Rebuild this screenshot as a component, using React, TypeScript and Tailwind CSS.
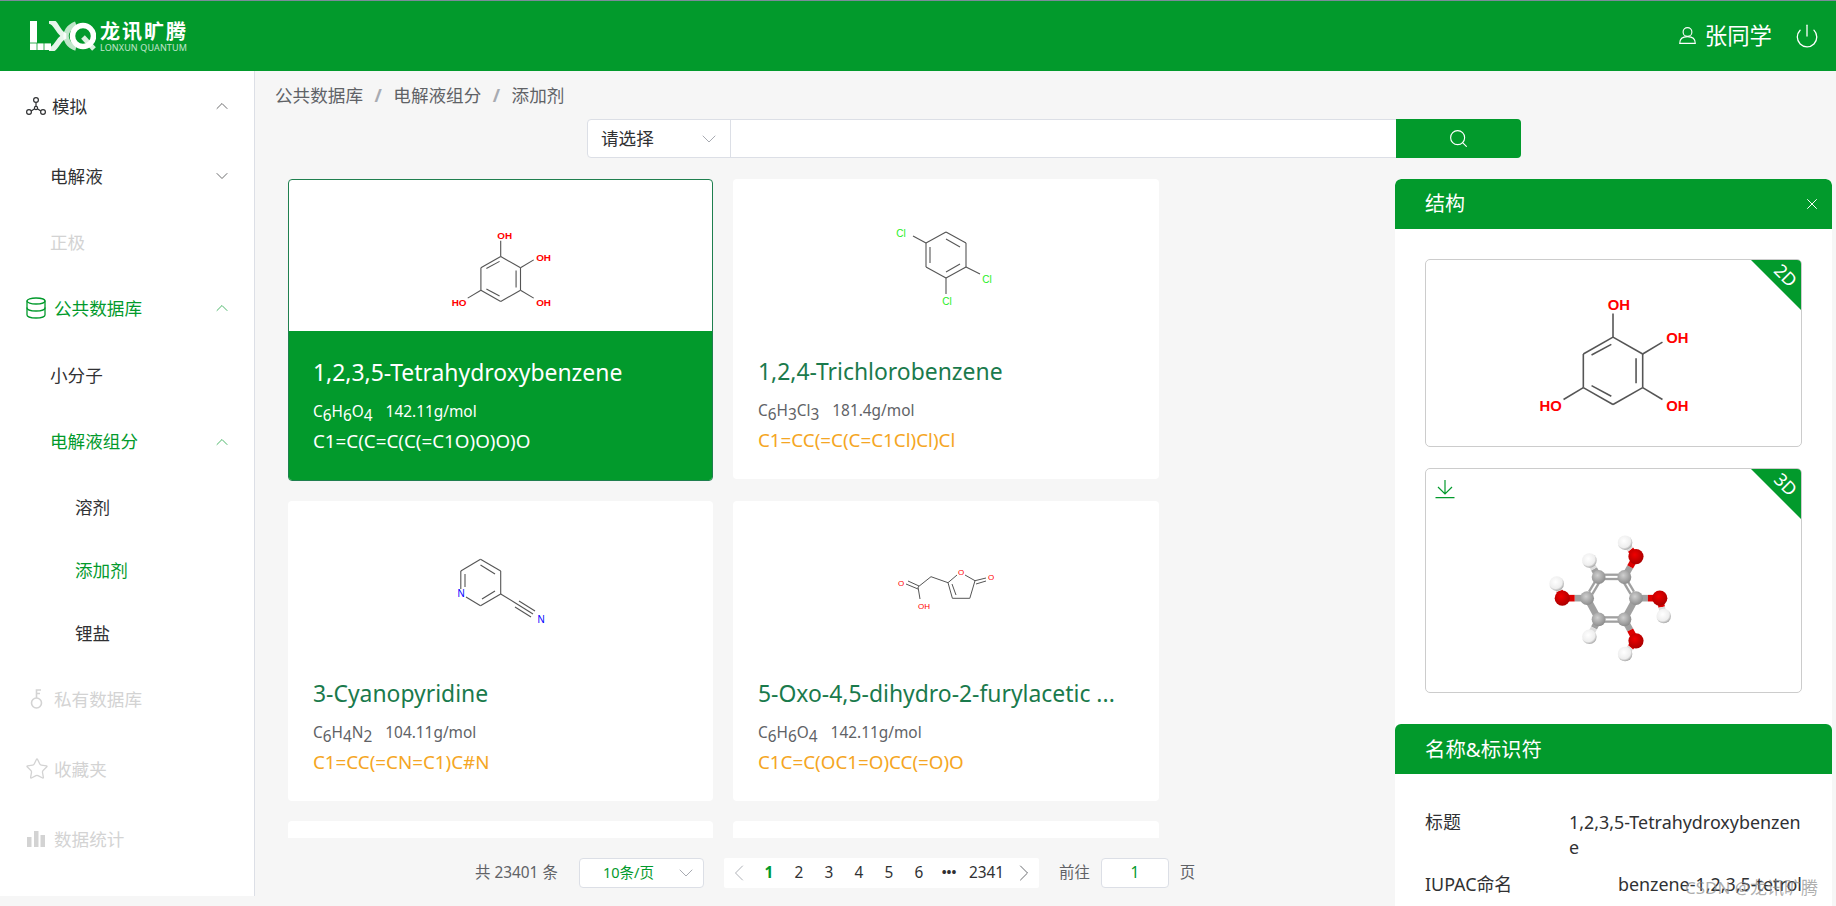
import { ChevronDown, ChevronLeft, ChevronRight, ChevronUp, Database, Power, Search, Star, X } from 'lucide-react';
import type { ReactNode } from 'react';

const BOND = '#555555';

function Sub({ children }: { children: ReactNode }) {
  return <sub className="text-[1em]">{children}</sub>;
}

function Bonds({ lines, width = 1.1 }: { lines: number[][]; width?: number }) {
  return (
    <g stroke={BOND} strokeWidth={width} fill="none">
      {lines.map((l, i) => (
        <line key={i} x1={l[0]} y1={l[1]} x2={l[2]} y2={l[3]} />
      ))}
    </g>
  );
}

// same drawing for the little card picture and the big panel one
function Tetrahydroxy({ cx, cy, scale, width }: { cx: number; cy: number; scale: number; width: number }) {
  return (
    <g transform={`translate(${cx} ${cy}) scale(${scale})`}>
      <Bonds
        width={width}
        lines={[
          [0, -34, 30, -17], [30, -17, 30, 17], [30, 17, 0, 34], [0, 34, -30, 17], [-30, 17, -30, -17], [-30, -17, 0, -34],
          [-21.7, -16, -1.7, -26.7], [23.3, -12.7, 23.3, 12.7], [-21.7, 15, -1.7, 25.7],
          [0, -34, 0, -58], [30, -17, 50, -29], [30, 17, 50, 29], [-30, 17, -50, 29],
        ]}
      />
      <g fill="#ff0000" fontSize="15" fontWeight="700" fontFamily="'Liberation Sans', sans-serif" textAnchor="middle">
        <text x="6" y="-61">OH</text>
        <text x="65" y="-28">OH</text>
        <text x="65" y="41">OH</text>
        <text x="-63" y="41">HO</text>
      </g>
    </g>
  );
}

function Trichloro() {
  return (
    <svg className="block w-full h-full" viewBox="0 0 426 151">
      <Bonds
        lines={[
          [213, 53, 233, 64], [233, 64, 233, 88], [233, 88, 213, 99], [213, 99, 193, 88], [193, 88, 193, 64], [193, 64, 213, 53],
          [213, 60, 227, 68], [197, 68, 197, 84], [227, 85, 213, 93],
          [193, 64, 180, 57], [233, 88, 247, 95], [213, 99, 213, 115],
        ]}
      />
      <g fill="#22ee22" fontSize="10" fontFamily="'Liberation Sans', sans-serif" textAnchor="middle">
        <text x="168" y="58">Cl</text>
        <text x="254" y="104">Cl</text>
        <text x="214" y="126">Cl</text>
      </g>
    </svg>
  );
}

function Cyanopyridine() {
  return (
    <svg className="block w-full h-full" viewBox="0 0 425 151">
      <Bonds
        lines={[
          [192.5, 58.3, 212.7, 70], [212.7, 70, 212.7, 93], [212.7, 93, 192.5, 104.7], [192.5, 104.7, 178, 96],
          [172.8, 88, 172.8, 70], [172.8, 70, 192.5, 58.3],
          [192.5, 64, 207, 73], [207, 90, 194, 98], [177, 73, 177, 86],
          [212.7, 93, 229, 103], [229, 103, 245, 113], [231, 100, 247, 110], [227, 106, 243, 116],
        ]}
      />
      <g fill="#0000ff" fontSize="10" fontFamily="'Liberation Sans', sans-serif" textAnchor="middle">
        <text x="173" y="96">N</text>
        <text x="253" y="122">N</text>
      </g>
    </svg>
  );
}

function Furylacetic() {
  return (
    <svg className="block w-full h-full" viewBox="0 0 426 151">
      <Bonds
        width={1}
        lines={[
          [173, 83, 185, 88], [175, 80, 186, 85], [185, 86, 187, 98], [185, 86, 198, 75.7], [198, 75.7, 215, 81.7],
          [215, 81.7, 224, 74], [232, 74, 242, 79.7], [242, 79.7, 236.8, 97.3], [236.8, 97.3, 219.4, 97.3],
          [219.4, 97.3, 215, 81.7], [223, 94, 219, 83], [242, 79.7, 253, 77], [243, 83, 253, 80],
        ]}
      />
      <g fill="#ff0000" fontSize="8" fontFamily="'Liberation Sans', sans-serif" textAnchor="middle">
        <text x="168" y="85">O</text>
        <text x="191" y="108">OH</text>
        <text x="228" y="74">O</text>
        <text x="258" y="79">O</text>
      </g>
    </svg>
  );
}

function Ball({ x, y, r, id }: { x: number; y: number; r: number; id: string }) {
  return <circle cx={x} cy={y} r={r} fill={`url(#${id})`} />;
}

function Ball3D() {
  const carbons = [[655, 352], [733, 352], [768, 416], [733, 480], [655, 480], [620, 416]];
  const oxygens = [[768, 290], [840, 416], [768, 545], [545, 416]];
  const hydrogens = [[735, 248], [852, 470], [735, 585], [528, 372], [627, 302], [627, 533]];
  const half = (a: number[], b: number[]) => [(a[0] + b[0]) / 2, (a[1] + b[1]) / 2];
  const co = [[0, 1], [1, 2], [2, 3], [3, 5]];
  const oh = [[0, 0], [1, 1], [2, 2], [3, 3]];
  const ch = [[0, 4], [4, 5]];
  return (
    <svg className="block w-full h-full" viewBox="135 25 1130 675">
      <defs>
        <radialGradient id="ballC" cx="42%" cy="38%" r="65%">
          <stop offset="0%" stopColor="#cfcfcf" />
          <stop offset="100%" stopColor="#8a8a8a" />
        </radialGradient>
        <radialGradient id="ballO" cx="42%" cy="38%" r="65%">
          <stop offset="0%" stopColor="#f00000" />
          <stop offset="100%" stopColor="#a80000" />
        </radialGradient>
        <radialGradient id="ballH" cx="42%" cy="38%" r="65%">
          <stop offset="0%" stopColor="#ffffff" />
          <stop offset="70%" stopColor="#eeeeee" />
          <stop offset="100%" stopColor="#9d9d9d" />
        </radialGradient>
      </defs>
      <g stroke="#a0a0a0" strokeWidth="7">
        <line x1="664" y1="345" x2="724" y2="345" />
        <line x1="664" y1="358" x2="724" y2="358" />
        <line x1="664" y1="474" x2="724" y2="474" />
        <line x1="664" y1="487" x2="724" y2="487" />
        <line x1="636" y1="404" x2="662" y2="360" />
        <line x1="626" y1="396" x2="650" y2="356" />
        <line x1="726" y1="360" x2="752" y2="404" />
        <line x1="738" y1="356" x2="762" y2="396" />
      </g>
      <g stroke="#a0a0a0" strokeWidth="20">
        <line x1="620" y1="416" x2="655" y2="480" />
        <line x1="768" y1="416" x2="733" y2="480" />
      </g>
      {co.map(([o, c], i) => {
        const m = half(oxygens[o], carbons[c]);
        return (
          <g key={i} strokeWidth="20">
            <line x1={carbons[c][0]} y1={carbons[c][1]} x2={m[0]} y2={m[1]} stroke="#a0a0a0" />
            <line x1={m[0]} y1={m[1]} x2={oxygens[o][0]} y2={oxygens[o][1]} stroke="#dd0000" />
          </g>
        );
      })}
      {oh.map(([o, h], i) => {
        const m = half(oxygens[o], hydrogens[h]);
        return (
          <g key={i} strokeWidth="20">
            <line x1={oxygens[o][0]} y1={oxygens[o][1]} x2={m[0]} y2={m[1]} stroke="#dd0000" />
            <line x1={m[0]} y1={m[1]} x2={hydrogens[h][0]} y2={hydrogens[h][1]} stroke="#dddddd" />
          </g>
        );
      })}
      {ch.map(([c, h], i) => {
        const m = half(carbons[c], hydrogens[h]);
        return (
          <g key={i} strokeWidth="20">
            <line x1={carbons[c][0]} y1={carbons[c][1]} x2={m[0]} y2={m[1]} stroke="#a0a0a0" />
            <line x1={m[0]} y1={m[1]} x2={hydrogens[h][0]} y2={hydrogens[h][1]} stroke="#dddddd" />
          </g>
        );
      })}
      {carbons.map((p, i) => <Ball key={i} x={p[0]} y={p[1]} r={21} id="ballC" />)}
      {oxygens.map((p, i) => <Ball key={i} x={p[0]} y={p[1]} r={23} id="ballO" />)}
      {hydrogens.map((p, i) => <Ball key={i} x={p[0]} y={p[1]} r={22} id="ballH" />)}
    </svg>
  );
}

function Logo() {
  return (
    <div className="flex items-start ml-[30px]">
      <svg width="66" height="30" viewBox="0 0 66 30" className="block">
        <g fill="#ffffff">
          <rect x="0" y="0" width="7" height="29" />
          <rect x="0" y="22" width="21" height="7" />
        </g>
        <g stroke="#029a2c" strokeWidth="0.8">
          <line x1="0" y1="22" x2="21" y2="22" />
          <line x1="7" y1="22" x2="7" y2="29" />
          <line x1="14" y1="22" x2="14" y2="29" />
        </g>
        <g stroke="#ffffff" strokeWidth="5.5" fill="none">
          <path d="M19 0 C 27 0 28 14 36 15 C 28 16 27 29 19 29" opacity="0.9" />
          <path d="M46 3 C 38 6 36 12 36 15 C 36 18 38 25 46 27" opacity="0.75" />
          <circle cx="53" cy="15" r="10.5" strokeWidth="5.5" />
          <path d="M53 16 L64 28" strokeWidth="5" opacity="0.85" />
        </g>
      </svg>
      <div className="ml-[4px] text-white">
        <div className="mt-[1px] text-[20px] leading-[20px] font-bold tracking-[2px] whitespace-nowrap">龙讯旷腾</div>
        <div className="mt-[1px] text-[9px] leading-[9px] tracking-[0.12px] opacity-75 whitespace-nowrap">LONXUN QUANTUM</div>
      </div>
    </div>
  );
}

function UserIcon() {
  return (
    <svg width="17" height="17" viewBox="0 0 17 17" fill="none" stroke="#ffffff" strokeWidth="1.1">
      <circle cx="8.5" cy="5" r="4.4" />
      <path d="M0.7 16.4C0.7 12 4 9.6 8.5 9.6C13 9.6 16.3 12 16.3 16.4Z" />
    </svg>
  );
}

function DownloadIcon() {
  return (
    <svg width="20" height="20" viewBox="0 0 20 20" fill="none" stroke="#029a2c" strokeWidth="1.2" className="absolute top-[10px] left-[9px]">
      <path d="M10 1V15M3 8L10 15L17 8M0.5 18.6H19.5" />
    </svg>
  );
}

function MoleculeIcon() {
  return (
    <svg width="20" height="20" viewBox="0 0 20 20" fill="none" stroke="#303133" strokeWidth="1.2">
      <circle cx="10" cy="4" r="2.4" />
      <circle cx="3" cy="16" r="2.4" />
      <circle cx="17" cy="16" r="2.4" />
      <circle cx="10" cy="12" r="1.6" />
      <path d="M10 6.4V10.4M8.6 12.8L5.2 15M11.4 12.8L14.8 15" />
    </svg>
  );
}

function KeyIcon() {
  return (
    <svg width="14" height="20" viewBox="0 0 14 20" fill="none" stroke="#d3d3d3" strokeWidth="1.6">
      <circle cx="6.5" cy="14" r="5" />
      <path d="M6.5 9V1H11M6.5 4.5H10" />
    </svg>
  );
}

function BarsIcon() {
  return (
    <svg width="18" height="18" viewBox="0 0 18 18" fill="#d3d3d3">
      <rect x="0" y="7" width="4.5" height="10" />
      <rect x="7" y="1" width="4.5" height="16" />
      <rect x="13.5" y="5" width="4.5" height="12" />
    </svg>
  );
}

type MenuRow = {
  label: string;
  h: string;
  pl: string;
  tone: string;
  icon?: ReactNode;
  iconBox?: string;
  arrow?: 'up' | 'down';
};

const menu: MenuRow[] = [
  { label: '模拟', h: 'h-[70px]', pl: 'pl-[26px]', tone: 'text-[#303133]', icon: <MoleculeIcon />, iconBox: 'w-[26px]', arrow: 'up' },
  { label: '电解液', h: 'h-[70px]', pl: 'pl-[50px]', tone: 'text-[#303133]', arrow: 'down' },
  { label: '正极', h: 'h-[63px]', pl: 'pl-[50px]', tone: 'text-[#d3d3d3]' },
  {
    label: '公共数据库',
    h: 'h-[68px]',
    pl: 'pl-[24px]',
    tone: 'text-[#029a2c]',
    icon: <Database size={24} strokeWidth={1.3} color="#029a2c" />,
    iconBox: 'w-[30px]',
    arrow: 'up',
  },
  { label: '小分子', h: 'h-[66px]', pl: 'pl-[50px]', tone: 'text-[#303133]' },
  { label: '电解液组分', h: 'h-[67px]', pl: 'pl-[50px]', tone: 'text-[#029a2c]', arrow: 'up' },
  { label: '溶剂', h: 'h-[64px]', pl: 'pl-[75px]', tone: 'text-[#303133]' },
  { label: '添加剂', h: 'h-[62px]', pl: 'pl-[75px]', tone: 'text-[#029a2c]' },
  { label: '锂盐', h: 'h-[64px]', pl: 'pl-[75px]', tone: 'text-[#303133]' },
  { label: '私有数据库', h: 'h-[68px]', pl: 'pl-[30px]', tone: 'text-[#d3d3d3]', icon: <KeyIcon />, iconBox: 'w-[24px]' },
  {
    label: '收藏夹',
    h: 'h-[72px]',
    pl: 'pl-[25px]',
    tone: 'text-[#d3d3d3]',
    icon: <Star size={24} strokeWidth={1.3} color="#d3d3d3" />,
    iconBox: 'w-[29px]',
  },
  { label: '数据统计', h: 'h-[68px]', pl: 'pl-[27px]', tone: 'text-[#d3d3d3]', icon: <BarsIcon />, iconBox: 'w-[27px]' },
];

function Sidebar() {
  return (
    <aside className="w-[255px] h-[825px] shrink-0 bg-white border-r border-[#dcdfe6]">
      {menu.map((row) => (
        <div key={row.label} className={`flex items-center pr-[22px] text-[17.6px] ${row.h} ${row.pl} ${row.tone}`}>
          {row.icon && <span className={`flex ${row.iconBox}`}>{row.icon}</span>}
          <span>{row.label}</span>
          {row.arrow === 'up' && <ChevronUp size={20} strokeWidth={1.2} className="ml-auto opacity-70" />}
          {row.arrow === 'down' && <ChevronDown size={20} strokeWidth={1.2} className="ml-auto opacity-70" />}
        </div>
      ))}
    </aside>
  );
}

function Card({
  name,
  formula,
  weight,
  smiles,
  picture,
  active,
}: {
  name: string;
  formula: ReactNode;
  weight: string;
  smiles: string;
  picture: ReactNode;
  active?: boolean;
}) {
  return (
    <div className={`rounded-[4px] overflow-hidden bg-white ${active ? 'border border-[#1f7f4f] h-[302px]' : 'h-[300px]'}`}>
      <div className="h-[151px]">{picture}</div>
      <div className={`pt-[25px] ${active ? 'bg-[#029a2c] text-white px-[24px] h-[150px]' : 'h-[149px] px-[25px]'}`}>
        <div className={`text-[22.9px] leading-[34px] whitespace-nowrap ${active ? '' : 'text-[#1a7a4c]'}`}>{name}</div>
        <div className={`mt-[10px] text-[15.4px] leading-[24px] flex gap-[13px] ${active ? '' : 'text-[#606266]'}`}>
          <span>{formula}</span>
          <span>{weight}</span>
        </div>
        <div className={`mt-[5px] text-[18.8px] leading-[24px] ${active ? '' : 'text-[#f5a623]'}`}>{smiles}</div>
      </div>
    </div>
  );
}

function Pager() {
  return (
    <div className="mt-[20px] w-max flex items-center pl-[187px] text-[15.4px] text-[#606266]">
      <span className="w-[83px] whitespace-nowrap">共 23401 条</span>
      <div className="ml-[21px] w-[125px] h-[30px] bg-white border border-[#dcdfe6] rounded-[4px] flex items-center pl-[23px] pr-[5px] text-[14.5px] text-[#029a2c]">
        <span>10条/页</span>
        <ChevronDown size={24} strokeWidth={1} color="#a8abb2" className="ml-auto" />
      </div>
      <div className="ml-[20px] h-[30px] bg-white rounded-[2px] flex items-center text-[#303133]">
        <span className="w-[30px] flex justify-center"><ChevronLeft size={28} strokeWidth={0.8} color="#a8abb2" /></span>
        <span className="w-[30px] text-center font-bold text-[#029a2c]">1</span>
        {['2', '3', '4', '5', '6'].map((n) => (
          <span key={n} className="w-[30px] text-center">{n}</span>
        ))}
        <span className="w-[30px] text-center font-bold text-[13px]">•••</span>
        <span className="w-[45px] text-center">2341</span>
        <span className="w-[30px] flex justify-center"><ChevronRight size={28} strokeWidth={0.8} color="#606266" /></span>
      </div>
      <span className="ml-[20px] whitespace-nowrap">前往</span>
      <div className="ml-[11px] w-[68px] h-[30px] bg-white border border-[#dcdfe6] rounded-[4px] flex items-center justify-center text-[#029a2c]">1</div>
      <span className="ml-[11px] whitespace-nowrap">页</span>
    </div>
  );
}

function Corner({ label }: { label: string }) {
  return (
    <div className="absolute top-0 right-0 w-[50px] h-[50px] bg-[#029a2c] [clip-path:polygon(0_0,100%_0,100%_100%)]">
      <span className="absolute top-[5px] right-[-1px] w-[32px] text-center text-white text-[18px] leading-[20px] rotate-45">{label}</span>
    </div>
  );
}

function SidePanel() {
  return (
    <div className="ml-[236px] w-[437px] h-[727px] bg-white overflow-hidden relative rounded-t-[6px]">
      <div className="h-[50px] bg-[#029a2c] rounded-t-[6px] flex items-center pl-[30px] pr-[11px] text-white text-[20px]">
        <span>结构</span>
        <X size={18} strokeWidth={1.3} className="ml-auto" />
      </div>
      <div className="mt-[30px] mx-[30px] w-[377px] h-[188px] border border-[#cccccc] rounded-[5px] relative overflow-hidden">
        <svg className="block w-full h-full" viewBox="0 0 377 188">
          <Tetrahydroxy cx={188} cy={112} scale={1} width={1.6} />
        </svg>
        <Corner label="2D" />
      </div>
      <div className="mt-[21px] mx-[30px] w-[377px] h-[225px] border border-[#cccccc] rounded-[5px] relative overflow-hidden">
        <Ball3D />
        <Corner label="3D" />
        <DownloadIcon />
      </div>
      <div className="mt-[31px] h-[50px] bg-[#029a2c] rounded-t-[6px] flex items-center pl-[30px] text-white text-[20.4px]">名称&amp;标识符</div>
      <div className="mt-[36px] mx-[30px] text-[17.9px] leading-[25px] text-[#303133]">
        <div className="flex justify-between">
          <span>标题</span>
          <span className="w-[233px] break-all">1,2,3,5-Tetrahydroxybenzene</span>
        </div>
        <div className="flex justify-between mt-[12px]">
          <span>IUPAC命名</span>
          <span>benzene-1,2,3,5-tetrol</span>
        </div>
      </div>
    </div>
  );
}

export default function App() {
  return (
    <div className="h-screen w-full overflow-hidden bg-[#f6f6f6] font-['Noto_Sans','Noto_Sans_CJK_SC',sans-serif] relative">
      <div className="h-[1px] bg-[#7c8b9a]" />
      <header className="h-[70px] bg-[#029a2c] flex items-center justify-between text-white">
        <Logo />
        <div className="flex items-center pr-[16px]">
          <UserIcon />
          <span className="ml-[9px] text-[22.4px]">张同学</span>
          <Power size={26} strokeWidth={1.2} className="ml-[22px]" />
        </div>
      </header>

      <div className="flex">
        <Sidebar />
        <main className="flex-1 min-w-0">
          <div className="h-[48px] pl-[20px] flex items-center text-[17.6px] text-[#606266]">
            <span>公共数据库</span>
            <span className="mx-[11.5px] font-bold text-[#a8abb2]">/</span>
            <span>电解液组分</span>
            <span className="mx-[11.5px] font-bold text-[#a8abb2]">/</span>
            <span>添加剂</span>
          </div>
          <div className="ml-[332px] w-[934px] h-[39px] flex rounded-[4px] border border-[#dcdfe6] bg-white">
            <div className="w-[143px] border-r border-[#dcdfe6] flex items-center pl-[13px] pr-[9px] text-[17.6px] text-[#303133]">
              <span>请选择</span>
              <ChevronDown size={24} strokeWidth={1} color="#a8abb2" className="ml-auto" />
            </div>
            <div className="flex-1" />
            <div className="w-[125px] -my-[1px] -mr-[1px] bg-[#029a2c] rounded-r-[4px] flex items-center justify-center">
              <Search size={21} strokeWidth={1.3} color="#ffffff" />
            </div>
          </div>
          <div className="mt-[21px] pl-[33px] flex items-start">
            <div className="w-[871px] shrink-0">
              <div className="h-[659px] overflow-hidden">
                <div className="grid grid-cols-[425px_426px] gap-x-[20px] gap-y-[20px] items-start">
                  <div className="h-[302px]">
                    <Card
                      active
                      name="1,2,3,5-Tetrahydroxybenzene"
                      formula={<>C<Sub>6</Sub>H<Sub>6</Sub>O<Sub>4</Sub></>}
                      weight="142.11g/mol"
                      smiles="C1=C(C=C(C(=C1O)O)O)O"
                      picture={
                        <svg className="block w-full h-full" viewBox="1 1 423 151">
                          <Tetrahydroxy cx={212.7} cy={100} scale={0.66} width={1.7} />
                        </svg>
                      }
                    />
                  </div>
                  <Card
                    name="1,2,4-Trichlorobenzene"
                    formula={<>C<Sub>6</Sub>H<Sub>3</Sub>Cl<Sub>3</Sub></>}
                    weight="181.4g/mol"
                    smiles="C1=CC(=C(C=C1Cl)Cl)Cl"
                    picture={<Trichloro />}
                  />
                  <Card
                    name="3-Cyanopyridine"
                    formula={<>C<Sub>6</Sub>H<Sub>4</Sub>N<Sub>2</Sub></>}
                    weight="104.11g/mol"
                    smiles="C1=CC(=CN=C1)C#N"
                    picture={<Cyanopyridine />}
                  />
                  <Card
                    name="5-Oxo-4,5-dihydro-2-furylacetic ..."
                    formula={<>C<Sub>6</Sub>H<Sub>6</Sub>O<Sub>4</Sub></>}
                    weight="142.11g/mol"
                    smiles="C1C=C(OC1=O)CC(=O)O"
                    picture={<Furylacetic />}
                  />
                  <div className="h-[300px] rounded-[4px] bg-white" />
                  <div className="h-[300px] rounded-[4px] bg-white" />
                </div>
              </div>
              <Pager />
            </div>
            <SidePanel />
          </div>
        </main>
      </div>

      <div className="absolute left-[1685px] top-[875px] text-[17px] leading-[26px] text-[#8a8a8a]/70 whitespace-nowrap">CSDN @龙讯旷腾</div>
    </div>
  );
}
